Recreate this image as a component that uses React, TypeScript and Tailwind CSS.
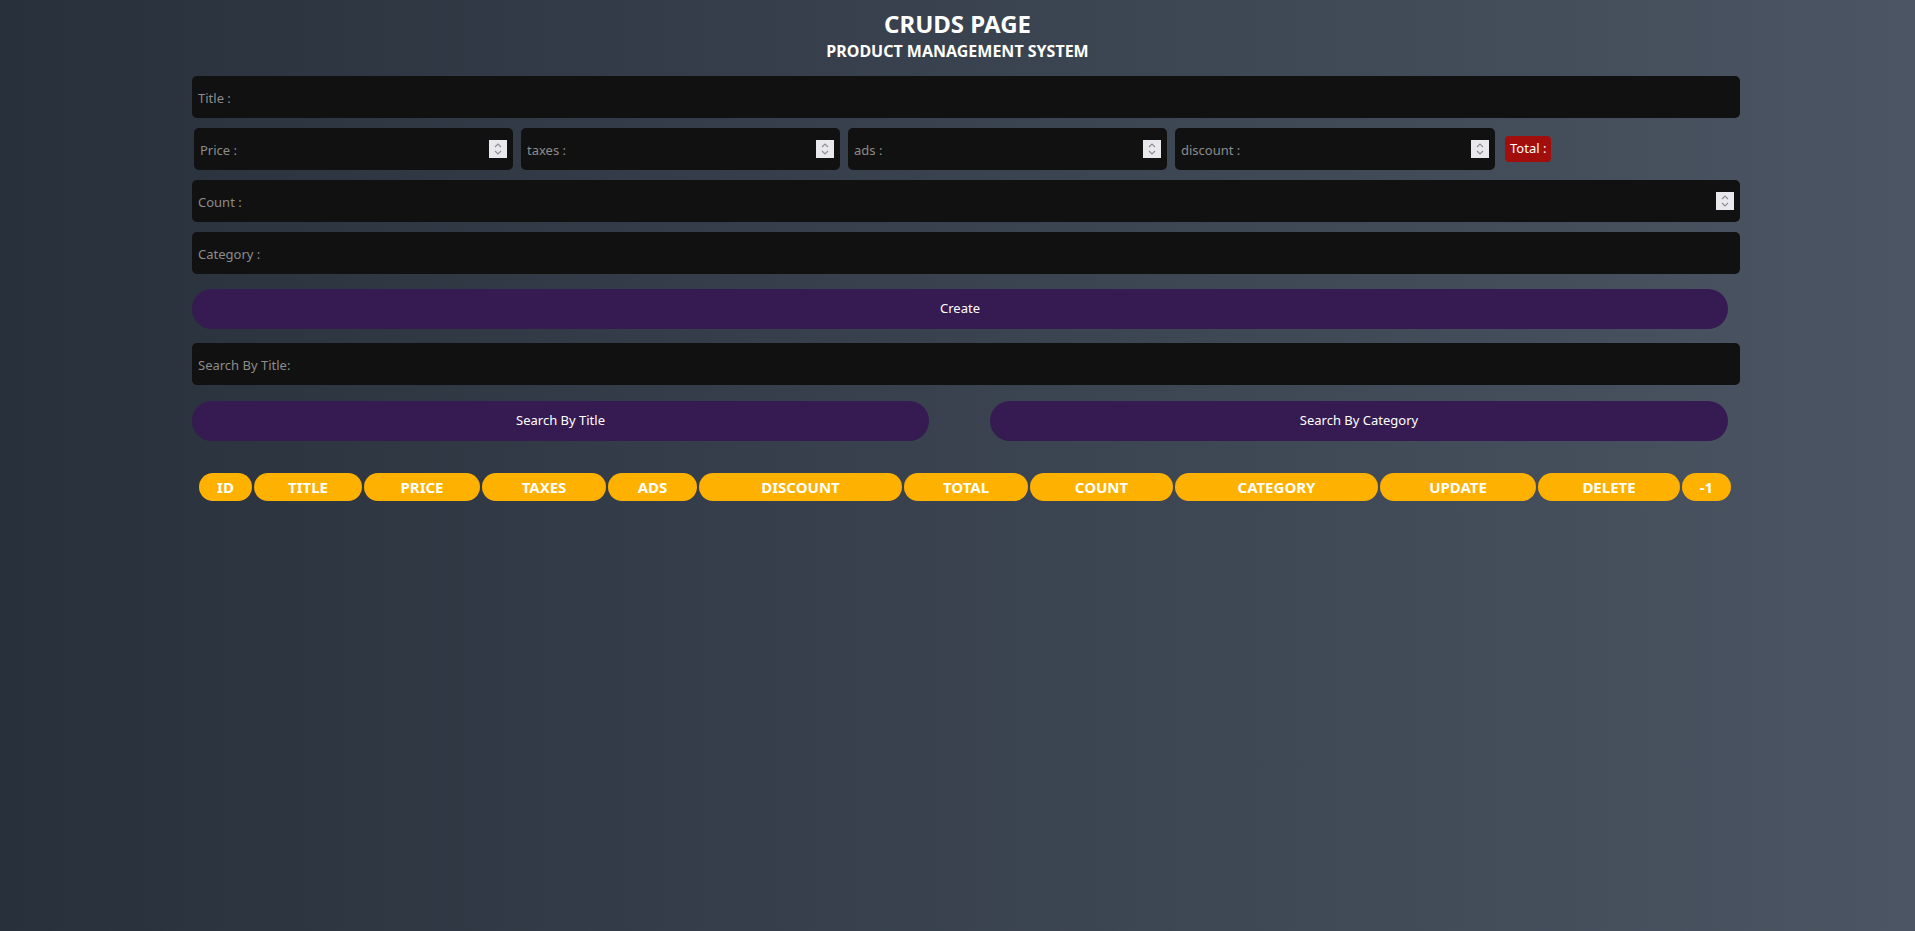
import React from "react";

const font = { fontFamily: '"Noto Sans", "Open Sans", Arial, sans-serif' };

function Spinner() {
  return (
    <div className="w-[18px] h-[18px] bg-[#e9e9ed] flex flex-col items-center justify-center shrink-0">
      <svg width="10" height="16" viewBox="0 0 10 16" fill="none" stroke="#8e8e98" strokeWidth="1.2">
        <path d="M2 6 L5 3 L8 6" />
        <path d="M2 10 L5 13 L8 10" />
      </svg>
    </div>
  );
}

function Field({ placeholder, number, className }: { placeholder: string; number?: boolean; className?: string }) {
  return (
    <div className={"h-[42px] bg-[#111111] rounded-[5px] flex items-center pl-[6px] pr-[6px] " + (className ?? "")}>
      <input
        type="text"
        placeholder={placeholder}
        className="flex-1 min-w-0 bg-transparent outline-none text-[13px] leading-[18px] pt-[2px] text-white placeholder:text-[#8c8c8c]"
        style={font}
      />
      {number && <Spinner />}
    </div>
  );
}

const headers: [string, string][] = [
  ["ID", "w-[53px]"],
  ["TITLE", "w-[108px]"],
  ["PRICE", "w-[116px]"],
  ["TAXES", "w-[124px]"],
  ["ADS", "w-[89px]"],
  ["DISCOUNT", "w-[203px]"],
  ["TOTAL", "w-[124px]"],
  ["COUNT", "w-[143px]"],
  ["CATEGORY", "w-[203px]"],
  ["UPDATE", "w-[156px]"],
  ["DELETE", "w-[142px]"],
  ["-1", "w-[49px]"],
];

export default function App() {
  return (
    <div className="min-h-screen w-full bg-linear-to-r from-[#28303b] to-[#4b5563]" style={font}>
      <div className="flex flex-col items-center pt-[9px] text-white">
        <h1 className="text-[24px] font-bold leading-[30px]">CRUDS PAGE</h1>
        <h2 className="text-[16px] font-bold leading-[20px] mt-[2px]">PRODUCT MANAGEMENT SYSTEM</h2>
      </div>

      <div className="ml-[192px] w-[1548px] flex flex-col mt-[15px]">
        <Field placeholder="Title :" />

        <div className="flex items-center mt-[10px] pl-[2px] gap-[8px]">
          <Field placeholder="Price :" number className="w-[319px]" />
          <Field placeholder="taxes :" number className="w-[319px]" />
          <Field placeholder="ads :" number className="w-[319px]" />
          <Field placeholder="discount :" number className="w-[320px]" />
          <div className="ml-[2px] h-[26px] px-[5px] rounded-[4px] bg-[#a10e0c] text-white text-[13px] flex items-center">
            Total :
          </div>
        </div>

        <Field placeholder="Count :" number className="mt-[10px]" />
        <Field placeholder="Category :" className="mt-[10px]" />

        <button className="mt-[15px] w-[1536px] h-[40px] rounded-full bg-[#361a52] text-white text-[13px]">
          Create
        </button>

        <Field placeholder="Search By Title:" className="mt-[14px]" />

        <div className="mt-[16px] w-[1536px] flex justify-between">
          <button className="w-[737px] h-[40px] rounded-full bg-[#361a52] text-white text-[13px]">
            Search By Title
          </button>
          <button className="w-[738px] h-[40px] rounded-full bg-[#361a52] text-white text-[13px]">
            Search By Category
          </button>
        </div>

        <div className="mt-[32px] ml-[7px] flex gap-[2px]">
          {headers.map(([h, w]) => (
            <div
              key={h}
              className={w + " h-[28px] rounded-full bg-[#ffb100] text-white font-bold text-[15px] flex items-center justify-center"}
            >
              {h}
            </div>
          ))}
        </div>
      </div>
    </div>
  );
}
